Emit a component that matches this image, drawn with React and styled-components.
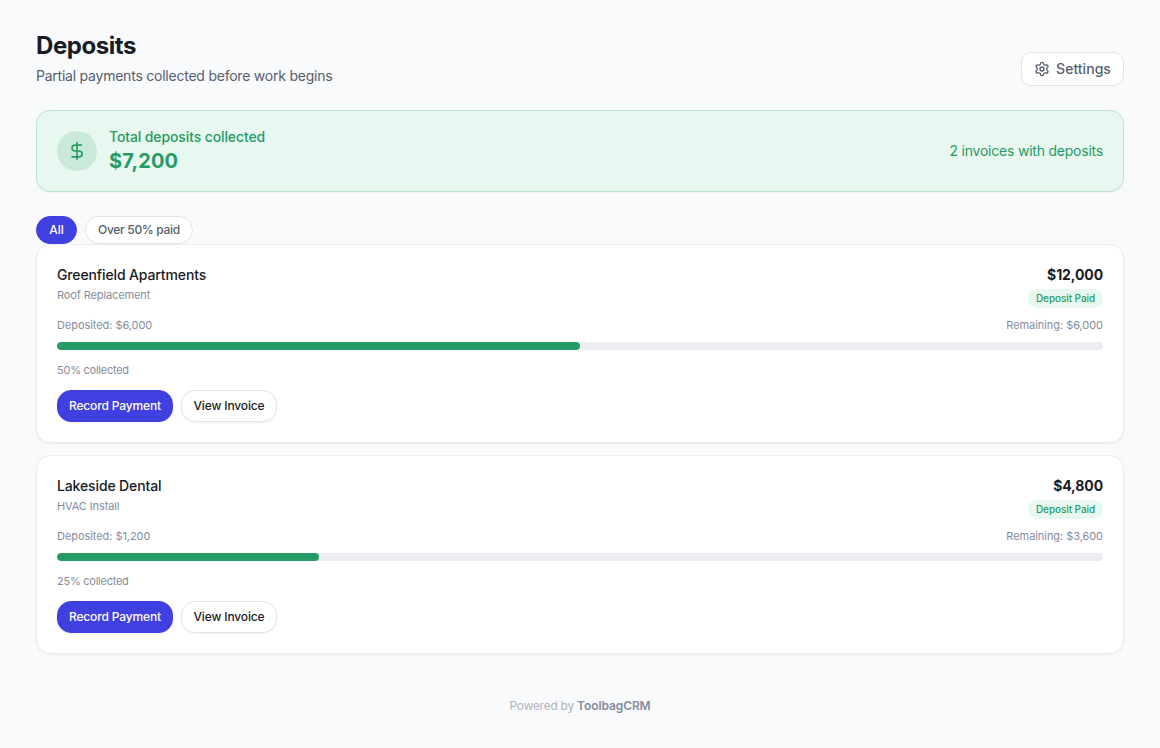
import React from "react";
import styled, { createGlobalStyle } from "styled-components";
import { DollarSign, Settings } from "lucide-react";

const GlobalStyle = createGlobalStyle`
  * { box-sizing: border-box; }
  body {
    margin: 0;
    background: #f9fafc;
    color: #181b25;
    font-family: Inter, "Liberation Sans", sans-serif;
    font-size: 14px;
    line-height: 20px;
    white-space: nowrap;
  }
  h1, h2, p { margin: 0; }
  button { font-family: inherit; cursor: pointer; }
`;

const Page = styled.main`
  min-height: 748px;
  padding: 30px 36px 0;
`;

const Header = styled.header`
  display: flex;
  justify-content: space-between;
  align-items: flex-end;
  height: 56px;
`;

const Title = styled.h1`
  font-size: 24px;
  line-height: 32px;
  font-weight: 700;
  letter-spacing: -0.44px;
`;

const Subtitle = styled.p`
  margin-top: 4px;
  color: #575e70;
  letter-spacing: -0.23px;
`;

const SettingsButton = styled.button`
  display: flex;
  align-items: center;
  justify-content: center;
  gap: 6px;
  width: 103px;
  height: 34px;
  padding: 0;
  border: 1px solid #e1e3ea;
  border-radius: 10px;
  background: #fff;
  color: #575e70;
  font-size: 14px;
  font-weight: 500;
  line-height: 20px;
  letter-spacing: 0.03px;
`;

const Banner = styled.section`
  display: flex;
  align-items: center;
  gap: 12px;
  height: 82px;
  margin-top: 24px;
  padding: 0 20px;
  border: 1px solid #bee6d2;
  border-radius: 14px;
  background: #e8f8f0;
  color: #279b65;
  box-shadow: 0 1px 2px rgba(20, 30, 50, 0.05);
`;

const IconCircle = styled.div`
  display: flex;
  align-items: center;
  justify-content: center;
  width: 40px;
  height: 40px;
  border-radius: 50%;
  background: #c9eadb;
`;

const BannerLabel = styled.p`
  font-weight: 500;
  letter-spacing: -0.12px;
`;

const BannerTotal = styled.p`
  font-size: 20px;
  line-height: 28px;
  font-weight: 700;
  letter-spacing: 0.12px;
`;

const BannerNote = styled.p`
  margin-left: auto;
  letter-spacing: -0.22px;
`;

const Filters = styled.div`
  display: flex;
  gap: 8px;
  margin-top: 24px;
`;

const Chip = styled.button`
  width: ${(p) => p.$width}px;
  height: 28px;
  padding: 0 0 2px;
  border: 1px solid ${(p) => (p.$active ? "#4040e0" : "#e1e3ea")};
  border-radius: 14px;
  background: ${(p) => (p.$active ? "#4040e0" : "#fff")};
  color: ${(p) => (p.$active ? "#fff" : "#575e70")};
  font-size: 12px;
  font-weight: 500;
  letter-spacing: ${(p) => (p.$active ? 0 : -0.3)}px;
`;

const CardList = styled.div`
  display: flex;
  flex-direction: column;
  gap: 12px;
`;

const Card = styled.article`
  height: 199px;
  padding: 20px;
  border: 1px solid #ecedf1;
  border-radius: 14px;
  background: #fff;
  box-shadow: 0 1px 2px rgba(20, 30, 50, 0.06);
`;

const Row = styled.div`
  display: flex;
  justify-content: space-between;
`;

const CardHead = styled(Row)`
  height: 52px;
`;

const Customer = styled.h2`
  font-size: 14px;
  line-height: 20px;
  font-weight: 500;
  letter-spacing: -0.13px;
`;

const Muted = styled.p`
  color: #868c9d;
  font-size: 11px;
  line-height: 16px;
  letter-spacing: -0.06px;
`;

const Job = styled(Muted)`
  margin-top: 2px;
  letter-spacing: -0.12px;
`;

const Collected = styled(Muted)`
  letter-spacing: -0.25px;
`;

const AmountColumn = styled.div`
  display: flex;
  flex-direction: column;
  align-items: flex-end;
  gap: 4px;
`;

const Amount = styled.p`
  font-weight: 700;
  letter-spacing: -0.1px;
`;

const Badge = styled.span`
  width: 75px;
  height: 19px;
  border-radius: 10px;
  background: #e8f8f0;
  color: #279b65;
  font-size: 10px;
  line-height: 19px;
  font-weight: 500;
  letter-spacing: -0.08px;
  text-align: center;
`;

const Track = styled.div`
  height: 8px;
  margin: 9px 0 12px;
  border-radius: 4px;
  background: #ecedf2;
  overflow: hidden;
`;

const Fill = styled.div`
  height: 100%;
  border-radius: 4px;
  background: #279b65;
`;

const Actions = styled.div`
  display: flex;
  gap: 8px;
  margin-top: 12px;
`;

const ActionButton = styled.button`
  width: ${(p) => (p.$primary ? 116 : 96)}px;
  height: 32px;
  padding: 0 0 2px;
  border: 1px solid ${(p) => (p.$primary ? "#4040e0" : "#e1e3ea")};
  border-radius: 14px;
  background: ${(p) => (p.$primary ? "#4040e0" : "#fff")};
  color: ${(p) => (p.$primary ? "#fff" : "#181b25")};
  box-shadow: 0 1px 2px rgba(20, 30, 50, 0.05);
  font-size: 12px;
  font-weight: 500;
  letter-spacing: -0.14px;
`;

const Footer = styled.footer`
  margin-top: 42px;
  color: #b2b5be;
  font-size: 12px;
  letter-spacing: -0.25px;
  text-align: center;

  strong {
    color: #858b9d;
    font-weight: 600;
    letter-spacing: -0.1px;
  }
`;

const deposits = [
  { customer: "Greenfield Apartments", job: "Roof Replacement", total: 12000, paid: 6000 },
  { customer: "Lakeside Dental", job: "HVAC Install", total: 4800, paid: 1200 },
];

const money = (n) => "$" + n.toLocaleString("en-US");

function DepositCard({ customer, job, total, paid }) {
  const percent = Math.round((paid / total) * 100);
  return (
    <Card>
      <CardHead>
        <div>
          <Customer>{customer}</Customer>
          <Job>{job}</Job>
        </div>
        <AmountColumn>
          <Amount>{money(total)}</Amount>
          <Badge>Deposit Paid</Badge>
        </AmountColumn>
      </CardHead>
      <Row>
        <Muted>{`Deposited: ${money(paid)}`}</Muted>
        <Muted>{`Remaining: ${money(total - paid)}`}</Muted>
      </Row>
      <Track>
        <Fill style={{ width: `${percent}%` }} />
      </Track>
      <Collected>{`${percent}% collected`}</Collected>
      <Actions>
        <ActionButton $primary>Record Payment</ActionButton>
        <ActionButton>View Invoice</ActionButton>
      </Actions>
    </Card>
  );
}

export default function App() {
  return (
    <>
      <GlobalStyle />
      <Page>
        <Header>
          <div>
            <Title>Deposits</Title>
            <Subtitle>Partial payments collected before work begins</Subtitle>
          </div>
          <SettingsButton>
            <Settings size={16} strokeWidth={2} />
            <span>Settings</span>
          </SettingsButton>
        </Header>
        <Banner>
          <IconCircle>
            <DollarSign size={20} />
          </IconCircle>
          <div>
            <BannerLabel>Total deposits collected</BannerLabel>
            <BannerTotal>$7,200</BannerTotal>
          </div>
          <BannerNote>2 invoices with deposits</BannerNote>
        </Banner>
        <Filters>
          <Chip $active $width={41}>All</Chip>
          <Chip $width={108}>Over 50% paid</Chip>
        </Filters>
        <CardList>
          {deposits.map((d) => (
            <DepositCard key={d.customer} {...d} />
          ))}
        </CardList>
        <Footer>
          Powered by <strong>ToolbagCRM</strong>
        </Footer>
      </Page>
    </>
  );
}
